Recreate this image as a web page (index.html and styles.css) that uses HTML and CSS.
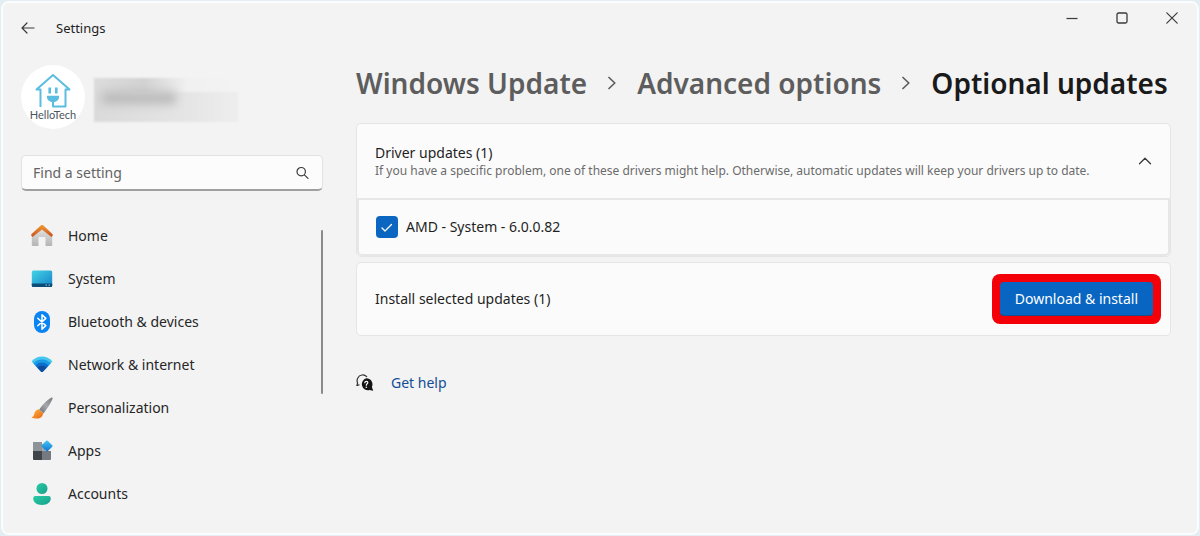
FILE: index.html
```html
<!DOCTYPE html>
<html lang="en">
<head>
<meta charset="utf-8">
<meta name="viewport" content="width=device-width, initial-scale=1">
<title>Settings</title>
<link rel="stylesheet" href="styles.css">
</head>
<body>
<div class="window">
  <header class="titlebar">
    <button class="icon-button" type="button" aria-label="Back">
      <svg width="14" height="12" viewBox="0 0 14 12" fill="none" stroke="currentColor" stroke-width="1.2" stroke-linecap="round" stroke-linejoin="round"><path d="M13 6H1M6 1L1 6l5 5"/></svg>
    </button>
    <span class="app-name">Settings</span>
    <div class="window-controls">
      <button class="icon-button" type="button" aria-label="Minimize">
        <svg width="12" height="12" viewBox="0 0 12 12" fill="none" stroke="currentColor" stroke-width="1.2"><path d="M.5 6.500h11"/></svg>
      </button>
      <button class="icon-button" type="button" aria-label="Maximize">
        <svg width="12" height="12" viewBox="0 0 12 12" fill="none" stroke="currentColor" stroke-width="1.3"><rect x="1" y="1" width="10" height="10" rx="1.500"/></svg>
      </button>
      <button class="icon-button" type="button" aria-label="Close">
        <svg width="12" height="12" viewBox="0 0 12 12" fill="none" stroke="currentColor" stroke-width="1.2" stroke-linecap="round"><path d="M.8.800l10.400 10.400M11.200.800L.8 11.200"/></svg>
      </button>
    </div>
  </header>

  <div class="layout">
    <aside class="sidebar">
      <div class="profile">
        <div class="avatar">
          <svg width="36" height="36" viewBox="0 0 36 36" fill="none" stroke="#5bbde0" stroke-width="2" stroke-linejoin="round"><path d="M5.500 35V17.500H1.500L18 3l16.500 14.500h-4V34.500H18V29"/><path d="M14.700 15.500v6M21.300 15.500v6" stroke-width="2.600"/><path d="M12 23.700h12v1.500a6 5 0 0 1-12 0z" fill="#5bbde0" stroke="none"/></svg>
          <span class="avatar-name">HelloTech</span>
        </div>
        <div class="redacted" aria-hidden="true"><div class="redacted-name"></div><div class="redacted-mail"></div></div>
      </div>

      <form class="search">
        <input class="search-input" type="search" placeholder="Find a setting" aria-label="Find a setting">
        <button class="icon-button" type="button" aria-label="Search">
          <svg width="13" height="13" viewBox="0 0 13 13" fill="none" stroke="currentColor" stroke-width="1.200" stroke-linecap="round"><circle cx="5.200" cy="5.700" r="4.200"/><path d="M8.400 8.900L12 12.400"/></svg>
        </button>
      </form>

      <div class="nav-scroll">
        <nav class="nav" aria-label="Settings">
          <a class="nav-link" href="#home">
            <svg width="22" height="22" viewBox="0 0 22 22"><defs><linearGradient id="wall" x2="0" y2="1"><stop offset="0" stop-color="#e4e4e4"/><stop offset="1" stop-color="#b4b4b4"/></linearGradient><linearGradient id="roof" x2="0" y2="1"><stop offset="0" stop-color="#f09a33"/><stop offset="1" stop-color="#c94f20"/></linearGradient></defs><path d="M11 3L.8 11.500V20a1 1 0 0 0 1 1H7.500v-8a1 1 0 0 1 1-1h5a1 1 0 0 1 1 1v8h5.700a1 1 0 0 0 1-1v-8.500z" fill="url(#wall)"/><path d="M.3 9.200L9.700.500a2 2 0 0 1 2.700 0l9.300 8.700v1.600l-1.300 1.300L11 4.500l-9.500 7.600L.3 10.800z" fill="url(#roof)"/></svg>
            <span>Home</span></a>
          <a class="nav-link" href="#system">
            <svg width="22" height="22" viewBox="0 0 22 22"><defs><linearGradient id="screen" x2="1" y2="1"><stop offset="0" stop-color="#43d3e6"/><stop offset="1" stop-color="#1683c7"/></linearGradient></defs><rect x=".800" y="2.500" width="20.400" height="16.500" rx="1.500" fill="url(#screen)"/><path d="M.8 15.500h20.400v2a1.500 1.500 0 0 1-1.500 1.500H2.300a1.500 1.500 0 0 1-1.500-1.500z" fill="#0c4c78"/><path d="M14.500 16.600h1.500v1.200h-1.500zM17.500 16.600H19v1.200h-1.500z" fill="#7eb1ce"/></svg>
            <span>System</span></a>
          <a class="nav-link" href="#bluetooth">
            <svg width="22" height="22" viewBox="0 0 22 22"><rect x="3" width="16" height="22" rx="8" fill="#0b84f3"/><path d="M6.800 7.200l8 7.400-3.800 3.600V3.800l3.800 3.600-8 7.400" fill="none" stroke="#fff" stroke-width="1.500" stroke-linejoin="round" stroke-linecap="round"/></svg>
            <span>Bluetooth &amp; devices</span></a>
          <a class="nav-link" href="#network">
            <svg width="22" height="22" viewBox="0 0 22 22"><defs><clipPath id="fan"><path d="M.6 7.400C6 1 16 1 21.400 7.400L12 17.600a1.400 1.400 0 0 1-2 0z"/></clipPath></defs><g clip-path="url(#fan)"><path d="M0 0h22v22H0z" fill="#45c6ee"/><circle cx="11" cy="17" r="11.500" fill="#1b9be3"/><circle cx="11" cy="17" r="8.500" fill="#0d6fcd"/><circle cx="11" cy="17" r="5.500" fill="#104c9e"/></g></svg>
            <span>Network &amp; internet</span></a>
          <a class="nav-link" href="#personalization">
            <svg width="22" height="22" viewBox="0 0 22 22"><defs><linearGradient id="handle" x1="1" x2="0" y2="1"><stop offset="0" stop-color="#777b80"/><stop offset=".5" stop-color="#a4a8ac"/><stop offset="1" stop-color="#6b6e72"/></linearGradient><linearGradient id="bristle" x2="1" y2="1"><stop offset="0" stop-color="#ffb541"/><stop offset="1" stop-color="#e96513"/></linearGradient></defs><path d="M20 .800c1-.6 2 .2 1.500 1.300-2 4.500-5.300 9.700-9 14.400l-4.300-4C11.500 7.600 15.500 3.500 20 .800z" fill="url(#handle)"/><path d="M7.800 12.200l4.300 4.100c-.3 3.300-2.800 5.300-6.100 5.300-2.200 0-4.200-.300-5.500-1.400 2.300-.500 2.200-2 2.900-4 .7-2.300 2.400-3.800 4.400-4z" fill="url(#bristle)"/></svg>
            <span>Personalization</span></a>
          <a class="nav-link" href="#apps">
            <svg width="22" height="22" viewBox="0 0 22 22"><defs><linearGradient id="tile" x2="1" y2="1"><stop offset="0" stop-color="#45c8f5"/><stop offset="1" stop-color="#0f72cf"/></linearGradient></defs><path d="M2 2h9v9H2z" fill="#8e9398"/><path d="M2 11h9v9H3a1 1 0 0 1-1-1z" fill="#3f4449"/><path d="M11 11h9v8a1 1 0 0 1-1 1h-8z" fill="#757a80"/><path d="M11 4h3v7h-3z" fill="#a4a8ac"/><rect x="11.800" y="1.800" width="8.400" height="8.400" rx="1" transform="rotate(45 16 6)" fill="url(#tile)"/></svg>
            <span>Apps</span></a>
          <a class="nav-link" href="#accounts">
            <svg width="22" height="22" viewBox="0 0 22 22"><defs><linearGradient id="person" x2="1" y2="1"><stop offset="0" stop-color="#2acba5"/><stop offset="1" stop-color="#14a18b"/></linearGradient></defs><circle cx="11" cy="5.500" r="5.500" fill="url(#person)"/><path d="M4.500 13h13a2.300 2.300 0 0 1 2.300 2.300c0 4-3.500 6.700-8.800 6.700s-8.800-2.700-8.800-6.700A2.300 2.300 0 0 1 4.500 13z" fill="url(#person)"/></svg>
            <span>Accounts</span></a>
        </nav>
        <div class="scroll-thumb"></div>
      </div>
    </aside>

    <main class="content">
      <h1 class="breadcrumb">
        <a class="crumb" href="#windows-update">Windows Update</a>
        <svg class="separator" width="8" height="14" viewBox="0 0 8 14" fill="none" stroke="currentColor" stroke-width="1.700" stroke-linecap="round" stroke-linejoin="round"><path d="M1 1.500L6.800 7 1 12.500"/></svg>
        <a class="crumb" href="#advanced">Advanced options</a>
        <svg class="separator" width="8" height="14" viewBox="0 0 8 14" fill="none" stroke="currentColor" stroke-width="1.700" stroke-linecap="round" stroke-linejoin="round"><path d="M1 1.500L6.800 7 1 12.500"/></svg>
        <span class="current">Optional updates</span>
      </h1>

      <section class="card expander">
        <div class="card-row">
          <div>
            <h2 class="card-title">Driver updates (1)</h2>
            <p class="card-note">If you have a specific problem, one of these drivers might help. Otherwise, automatic updates will keep your drivers up to date.</p>
          </div>
          <button class="icon-button" type="button" aria-label="Collapse driver updates" aria-expanded="true">
            <svg width="14" height="8" viewBox="0 0 14 8" fill="none" stroke="currentColor" stroke-width="1.300" stroke-linecap="round" stroke-linejoin="round"><path d="M1.500 6.800L7 1.200l5.500 5.600"/></svg>
          </button>
        </div>
        <label class="driver">
          <input class="checkbox" type="checkbox" checked>
          <svg class="tick" width="22" height="22" viewBox="0 0 22 22" fill="none" stroke="#fff" stroke-width="1.300" stroke-linecap="round" stroke-linejoin="round"><path d="M6 12l3 3 6.500-6.500"/></svg>
          <span>AMD - System - 6.0.0.82</span>
        </label>
      </section>

      <section class="card card-row install">
        <h2 class="card-title">Install selected updates (1)</h2>
        <div class="highlight"><button class="primary" type="button">Download &amp; install</button></div>
      </section>

      <div class="help">
        <svg width="18" height="18" viewBox="0 0 18 18"><path d="M1 11.500l.6-2.500A5.500 5.500 0 0 1 1.800 4 5.500 5.500 0 0 1 10.700 2.600" fill="none" stroke="#333" stroke-width="1.200" stroke-linecap="round"/><path d="M1 11.500l2-.6" stroke="#333" stroke-width="1.200" stroke-linecap="round"/><path d="M10.300 4.300a6 6 0 0 1 5.600 8.600l1.300 3.900-3.700-.800A6 6 0 1 1 10.300 4.300z" fill="#151515"/><path d="M8.800 8.700c.2-2 3.200-1.800 3 .1-.1 1-1.500 1.100-1.500 2.400" fill="none" stroke="#fff" stroke-width="1.200" stroke-linecap="round"/><circle cx="10.300" cy="13.200" r=".800" fill="#fff"/></svg>
        <a class="help-link" href="#help">Get help</a>
      </div>
    </main>
  </div>
</div>
</body>
</html>
```
FILE: styles.css
```css
* { box-sizing: border-box; }

body {
  margin: 0;
  padding: 1px;
  min-height: 100vh;
  display: flex;
  background: #e3edf2;
  color: #1f1f1f;
  font: 14px/20px "Noto Sans", "Open Sans", sans-serif;
}

h1, h2, p { margin: 0; }
a { text-decoration: none; }

.window {
  flex: 1;
  min-width: 0;
  border: 2px solid #fafcfd;
  border-radius: 8px;
  background: #f3f3f3;
}

.titlebar {
  display: flex;
  align-items: center;
  height: 50px;
  padding-left: 18px;
}

.icon-button {
  display: flex;
  flex-shrink: 0;
  padding: 0;
  border: 0;
  background: none;
  color: #3a3a3a;
}

.app-name {
  margin-left: 21px;
  font-size: 13px;
}

.window-controls {
  display: flex;
  align-self: flex-start;
  gap: 38px;
  margin-left: auto;
  padding: 9px 19px 0 0;
}

.layout {
  display: flex;
  gap: 33px;
  padding: 0 26px 0 18px;
}

.sidebar {
  flex: 0 0 302px;
  padding-top: 12px;
}

.profile {
  display: flex;
  align-items: center;
  gap: 9px;
}

.avatar {
  display: flex;
  flex-direction: column;
  align-items: center;
  width: 64px;
  height: 64px;
  padding-top: 7px;
  border-radius: 50%;
  background: #fff;
}

.avatar-name {
  color: #4b5560;
  font: 11px/14px Lato, sans-serif;
}

.redacted {
  width: 144px;
  height: 44px;
  margin-top: 6px;
  background: linear-gradient(90deg, #dadada, #e6e6e6 70%, #eee);
  filter: blur(1px);
}

.redacted-name {
  height: 14px;
  background: linear-gradient(90deg, #dcdcdc, #d2d2d2 35%, #f1f1f1 65%, #f3f3f3);
}

.redacted-mail {
  width: 74px;
  height: 12px;
  margin-left: 8px;
  background: #bababa;
  filter: blur(5px);
}

.search {
  display: flex;
  align-items: center;
  height: 36px;
  margin-top: 26px;
  padding: 0 13px 0 11px;
  border: 1px solid #e2e2e2;
  border-bottom: 2px solid #a0a0a0;
  border-radius: 5px;
  background: #fcfcfc;
}

.search-input {
  flex: 1;
  min-width: 0;
  padding: 0;
  border: 0;
  outline: 0;
  background: none;
  font: inherit;
}

.search-input::placeholder { color: #636363; opacity: 1; }

.nav-scroll {
  display: flex;
  justify-content: space-between;
  margin-top: 23px;
}

.nav { flex: 1; }

.nav-link {
  display: flex;
  align-items: center;
  gap: 15px;
  height: 43px;
  padding-left: 10px;
  color: #262626;
}

.scroll-thumb {
  width: 2px;
  height: 164px;
  margin-top: 16px;
  border-radius: 1px;
  background: #8a8a8a;
}

.content {
  flex: 1;
  min-width: 0;
  padding-top: 10px;
}

.breadcrumb {
  display: flex;
  align-items: center;
  gap: 21px;
  font-size: 28px;
  line-height: 40px;
  font-weight: 600;
  white-space: nowrap;
}

.separator { flex-shrink: 0; }
.crumb, .separator { color: #5d5d5d; }
.current { color: #1a1a1a; }

.card {
  border: 1px solid #e5e5e5;
  border-radius: 5px;
  background: #fbfbfb;
}

.expander { margin-top: 20px; }

.card-row {
  display: flex;
  align-items: center;
  justify-content: space-between;
  min-height: 74px;
  padding: 0 18px;
}

.card-title {
  font-size: 14px;
  line-height: 20px;
  font-weight: 400;
}

.card-note {
  color: #6b6b6b;
  font-size: 12px;
  line-height: 16px;
}

.driver {
  display: flex;
  align-items: center;
  height: 58px;
  padding-left: 17px;
  border: 2px solid #e7e7e7;
  border-radius: 0 0 5px 5px;
}

.checkbox {
  width: 22px;
  height: 22px;
  margin: 0;
  border-radius: 4px;
  background: #0a66c0;
  appearance: none;
}

.tick {
  margin: 0 8px 0 -22px;
  visibility: hidden;
  pointer-events: none;
}

.checkbox:checked + .tick { visibility: visible; }

.install {
  margin-top: 5px;
  padding-right: 9px;
}

.highlight {
  padding: 8px;
  border-radius: 8px;
  background: #f30009;
}

.primary {
  display: block;
  height: 34px;
  padding: 0 15px;
  border: 0;
  border-bottom: 1px solid #1b4b8c;
  border-radius: 4px;
  background: #0866c2;
  color: #fff;
  font: inherit;
}

.help {
  display: flex;
  align-items: center;
  gap: 17px;
  margin-top: 37px;
}

.help-link { color: #124d95; }
```
